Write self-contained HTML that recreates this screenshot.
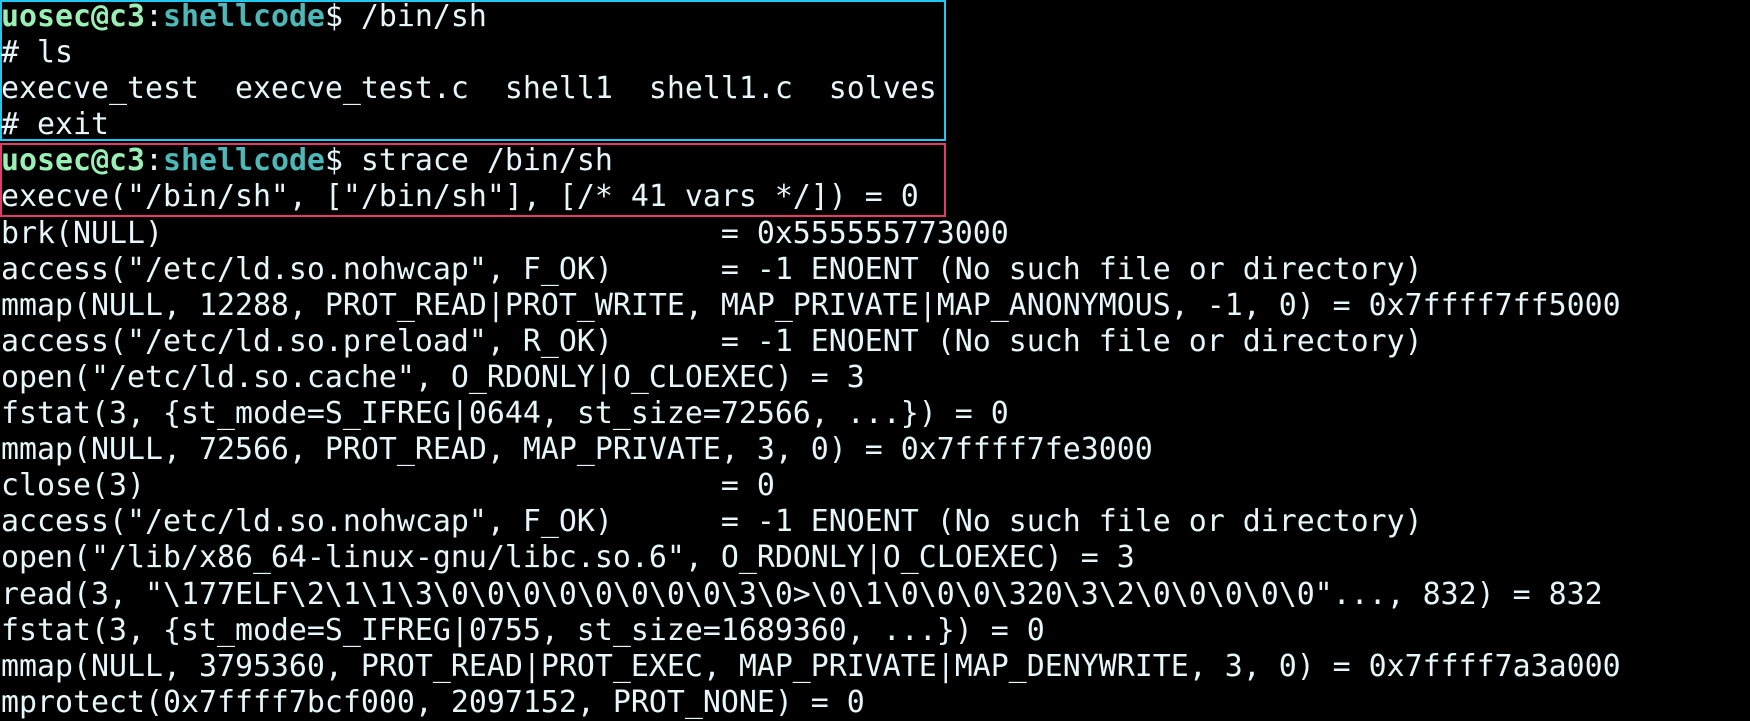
<!DOCTYPE html><html><head><style>
html,body{margin:0;background:#000;width:1750px;height:717px;overflow:hidden}
pre{margin:0;position:absolute;left:1px;top:-1px;font-family:"DejaVu Sans Mono","Liberation Mono",monospace;font-size:29.9px;line-height:36.1px;color:#e6f6fb}
.g{color:#9af0b4;font-weight:bold}.t{color:#4db8b8;font-weight:bold}
.b1{position:absolute;left:0;top:0;width:942px;height:137px;border:2px solid #1ec8f0}
.b2{position:absolute;left:0;top:143px;width:942px;height:70px;border:2px solid #e8386a}
</style></head><body>
<div class="b1"></div><div class="b2"></div>
<pre><span class="g">uosec@c3</span>:<span class="t">shellcode</span>$ /bin/sh
# ls
execve_test  execve_test.c  shell1  shell1.c  solves
# exit
<span class="g">uosec@c3</span>:<span class="t">shellcode</span>$ strace /bin/sh
execve("/bin/sh", ["/bin/sh"], [/* 41 vars */]) = 0
brk(NULL)                               = 0x555555773000
access("/etc/ld.so.nohwcap", F_OK)      = -1 ENOENT (No such file or directory)
mmap(NULL, 12288, PROT_READ|PROT_WRITE, MAP_PRIVATE|MAP_ANONYMOUS, -1, 0) = 0x7ffff7ff5000
access("/etc/ld.so.preload", R_OK)      = -1 ENOENT (No such file or directory)
open("/etc/ld.so.cache", O_RDONLY|O_CLOEXEC) = 3
fstat(3, {st_mode=S_IFREG|0644, st_size=72566, ...}) = 0
mmap(NULL, 72566, PROT_READ, MAP_PRIVATE, 3, 0) = 0x7ffff7fe3000
close(3)                                = 0
access("/etc/ld.so.nohwcap", F_OK)      = -1 ENOENT (No such file or directory)
open("/lib/x86_64-linux-gnu/libc.so.6", O_RDONLY|O_CLOEXEC) = 3
read(3, "\177ELF\2\1\1\3\0\0\0\0\0\0\0\0\3\0>\0\1\0\0\0\320\3\2\0\0\0\0\0"..., 832) = 832
fstat(3, {st_mode=S_IFREG|0755, st_size=1689360, ...}) = 0
mmap(NULL, 3795360, PROT_READ|PROT_EXEC, MAP_PRIVATE|MAP_DENYWRITE, 3, 0) = 0x7ffff7a3a000
mprotect(0x7ffff7bcf000, 2097152, PROT_NONE) = 0</pre>
</body></html>
